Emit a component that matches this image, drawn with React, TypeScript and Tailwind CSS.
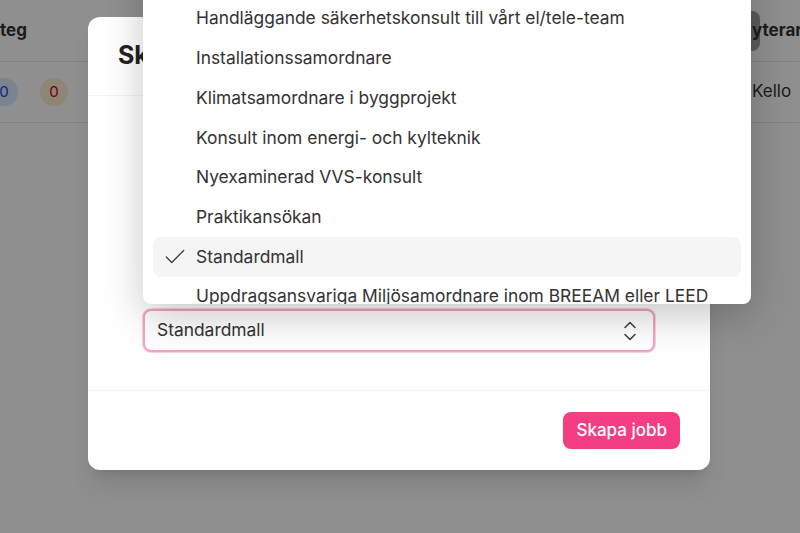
import React from "react";
import { Check } from "lucide-react";

const options = [
  "Ekonomiassistent till vårt team",
  "Handläggande säkerhetskonsult till vårt el/tele-team",
  "Installationssamordnare",
  "Klimatsamordnare i byggprojekt",
  "Konsult inom energi- och kylteknik",
  "Nyexaminerad VVS-konsult",
  "Praktikansökan",
  "Standardmall",
  "Uppdragsansvariga Miljösamordnare inom BREEAM eller LEED",
];

function UpDown() {
  return (
    <svg width="14" height="22" viewBox="0 0 14 22" fill="none" stroke="#444" strokeWidth="1.6" strokeLinecap="round" strokeLinejoin="round">
      <path d="M2 7.5 7 2.5l5 5" />
      <path d="M2 14.5 7 19.5l5-5" />
    </svg>
  );
}

export default function App() {
  const selected = "Standardmall";

  return (
    <div
      className="relative w-[800px] h-[533px] overflow-hidden bg-white text-[#333]"
      style={{ fontFamily: "Inter, 'Noto Sans', sans-serif" }}
    >
      {/* page behind the modal */}
      <div className="flex flex-col">
        <div className="h-[62px] border-b border-gray-200 flex items-center justify-between">
          <span className="text-[17px] font-bold text-[#333]">teg</span>
          <div className="flex items-center">
            <div className="w-[15px] h-[40px] rounded-r-lg bg-[#a3a3a3]" />
            <span className="-ml-[8px] text-[17px] font-bold text-[#333] whitespace-nowrap w-[48px]">
              yterare
            </span>
          </div>
        </div>
        <div className="h-[61px] border-b border-gray-200 flex items-center justify-between">
          <div className="flex items-center gap-[22px] -ml-[10px]">
            <span className="w-[28px] h-[28px] rounded-full bg-blue-100 text-blue-700 text-[15px] flex items-center justify-center">0</span>
            <span className="w-[28px] h-[28px] rounded-full bg-orange-100 text-red-700 text-[15px] flex items-center justify-center">0</span>
          </div>
          <span className="text-[17px] text-[#333] w-[48px] whitespace-nowrap">Kello</span>
        </div>
      </div>

      {/* backdrop */}
      <div className="absolute inset-0 bg-black/[0.44]" />

      {/* modal */}
      <div className="absolute left-[88px] top-[17px] w-[622px] h-[453px] bg-white rounded-xl flex flex-col shadow-xl">
        <div className="h-[79px] border-b border-gray-100 flex items-center px-[30px]">
          <h2 className="text-[25px] font-bold text-[#222]">Skapa jobb</h2>
        </div>
        <div className="flex-1 flex flex-col justify-end px-[55px] pb-[38px]">
          <button className="h-[43px] w-full rounded-lg border-2 border-[#f5a3c4] ring-1 ring-[#fbd0e2] bg-white flex items-center justify-between pl-[12px] pr-[16px] text-[17.4px] text-[#333]">
            <span>Standardmall</span>
            <UpDown />
          </button>
        </div>
        <div className="h-[80px] border-t border-gray-100 flex items-center justify-end pr-[30px]">
          <button className="h-[37px] px-[13px] rounded-lg bg-[#f43d82] text-white text-[17px] font-medium">
            Skapa jobb
          </button>
        </div>
      </div>

      {/* open select list */}
      <div className="absolute left-[143px] top-[-50px] w-[608px] h-[354px] bg-white rounded-lg overflow-hidden shadow-[0_12px_40px_rgba(0,0,0,0.22)]">
        <ul className="flex flex-col px-[10px] pt-[9px]">
          {options.map((o) => (
            <li
              key={o}
              className={
                "h-[39.7px] shrink-0 flex items-center rounded-lg text-[17.4px] whitespace-nowrap " +
                (o === selected ? "bg-[#f5f5f5]" : "")
              }
            >
              <span className="w-[43px] flex justify-center pl-[1px]">
                {o === selected && <Check size={26} strokeWidth={1.3} color="#444" />}
              </span>
              <span>{o}</span>
            </li>
          ))}
        </ul>
      </div>
    </div>
  );
}
